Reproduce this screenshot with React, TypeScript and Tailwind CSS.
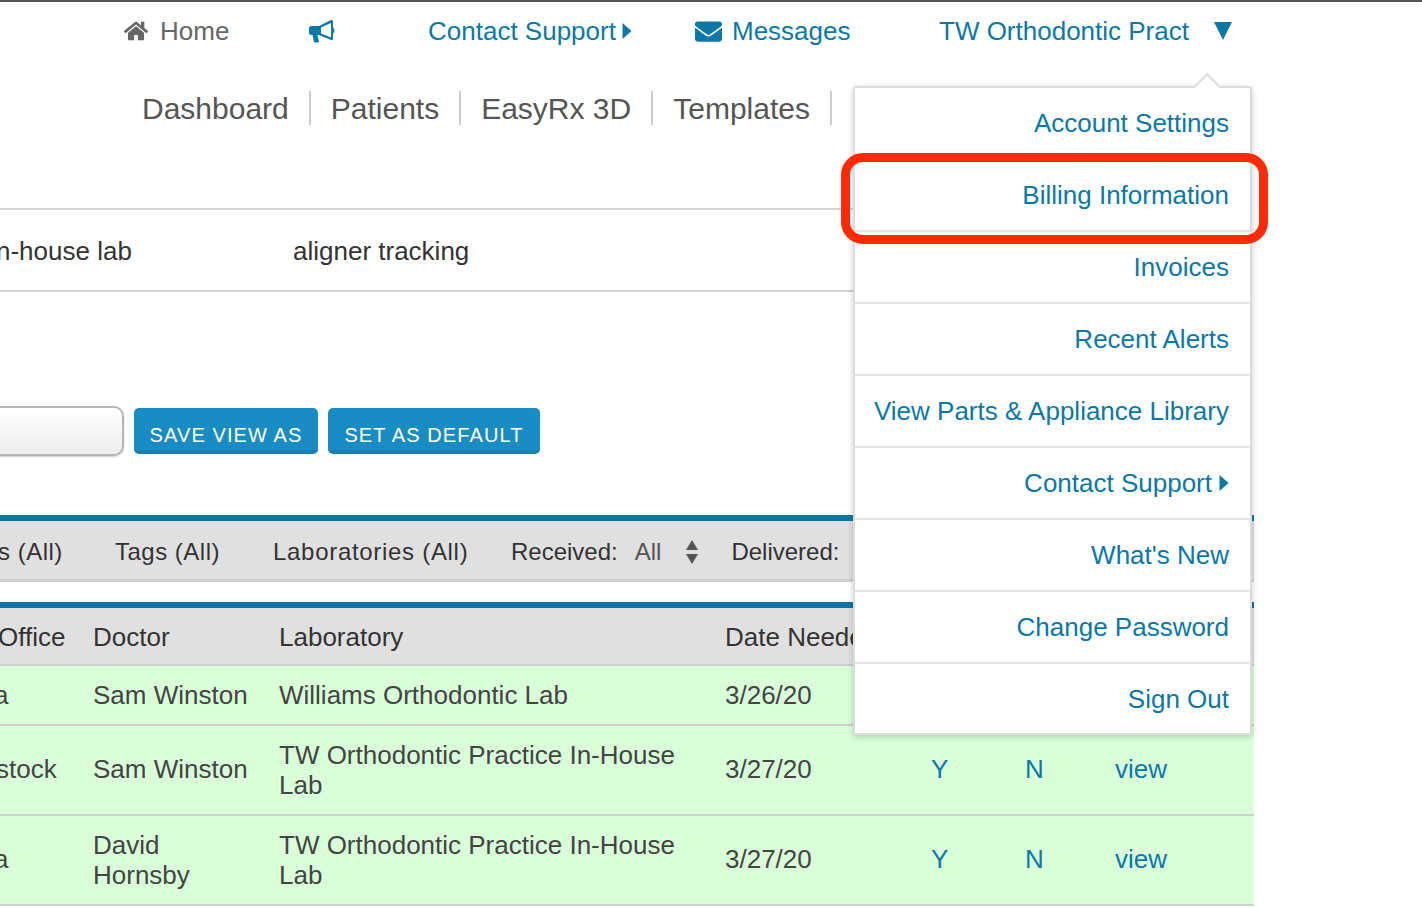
import React from 'react';
import { FaHome, FaEnvelope } from 'react-icons/fa';

const menuItems = [
  'Account Settings',
  'Billing Information',
  'Invoices',
  'Recent Alerts',
  'View Parts & Appliance Library',
  'Contact Support',
  "What's New",
  'Change Password',
  'Sign Out',
];

const rows = [
  { office: 'a', officeClass: '-ml-[6px]', doctor: 'Sam Winston', doctorClass: '', cellClass: '', lab: 'Williams Orthodontic Lab', date: '3/26/20', rowClass: 'h-[60px]' },
  { office: 'stock', officeClass: '-ml-[4px]', doctor: 'Sam Winston', doctorClass: 'mb-[2px]', cellClass: 'mb-[2px]', lab: 'TW Orthodontic Practice In-House Lab', date: '3/27/20', rowClass: 'h-[90px]' },
  { office: 'a', officeClass: '-ml-[6px]', doctor: 'David Hornsby', doctorClass: '', cellClass: 'mb-[2px]', lab: 'TW Orthodontic Practice In-House Lab', date: '3/27/20', rowClass: 'h-[90px]' },
];

const Caret: React.FC = () => (
  <svg width="10" height="18" viewBox="0 0 10 18" fill="currentColor" className="shrink-0">
    <path d="M0.5 1L9.5 9L0.5 17Z" />
  </svg>
);

const App: React.FC = () => {
  return (
    <div className="relative w-[1422px] h-[908px] overflow-hidden bg-white font-['Liberation_Sans',Arial,sans-serif] text-[26px] text-[#444]">
      {/* Top nav */}
      <div className="border-t-2 border-[#555] h-[60px] flex items-center pl-[124px] text-[#0b78a8]">
        <div className="w-[185px] flex items-center gap-[12px] text-[#666]">
          <FaHome className="text-[24px]" />
          <span>Home</span>
        </div>
        <div className="w-[119px]">
          <svg className="-ml-[1px]" width="27" height="24" viewBox="0 0 27 24" fill="currentColor">
            <path d="M1 9.5Q1 7 3.5 7H11V16H9.5L11 22.5Q11 23.5 9.5 23.5H7Q6 23.5 5.8 22.5L4.5 16H3.5Q1 16 1 13.5Z" />
            <path fillRule="evenodd" d="M11 7L23 1Q25 0.5 25 2.5V8.5Q26.5 9.5 26.5 11.5T25 14.5V19.5Q25 21.5 23 21L11 16ZM13 8.5V14.5L23 18.5V4Z" />
          </svg>
        </div>
        <div className="w-[267px] flex items-center gap-[6px]">
          <span>Contact Support</span>
          <Caret />
        </div>
        <div className="w-[244px] flex items-center gap-[10px]">
          <FaEnvelope className="text-[27px]" />
          <span>Messages</span>
        </div>
        <span>TW Orthodontic Pract</span>
        <svg className="ml-[25px]" width="18" height="18" viewBox="0 0 18 18" fill="currentColor">
          <path d="M0 0H18L9 18Z" />
        </svg>
      </div>

      {/* Main nav */}
      <div className="h-[34px] mt-[31px] flex items-center pl-[142px] text-[30px] text-[#555]">
        {['Dashboard', 'Patients', 'EasyRx 3D', 'Templates'].map((label) => (
          <div key={label} className="h-[34px] flex items-center pr-[20px] mr-[20px] border-r-2 border-[#ccc]">
            {label}
          </div>
        ))}
      </div>

      {/* Tags row */}
      <div className="mt-[83px] w-[1250px] h-[84px] pt-[2px] border-y-2 border-[#d2d2d2] flex items-center text-[26px] text-[#333]">
        <span className="w-[293px] shrink-0 -ml-[4px] mr-[4px]">n-house lab</span>
        <span>aligner tracking</span>
      </div>

      {/* View buttons */}
      <div className="mt-[114px] h-[50px] flex items-center">
        <div className="w-[124px] h-[50px] rounded-r-[10px] border-2 border-l-0 border-[#b5b5b5] bg-gradient-to-b from-white to-[#ececec] shadow-[0_1px_2px_rgba(0,0,0,0.2)]" />
        <button className="ml-[10px] w-[184px] h-[46px] pt-[12px] rounded-[5px] bg-[#1a8cc4] border-b-4 border-[#1680b5] text-white text-[20px] tracking-[1.1px]">SAVE VIEW AS</button>
        <button className="ml-[10px] w-[212px] h-[46px] pt-[12px] rounded-[5px] bg-[#1a8cc4] border-b-4 border-[#1680b5] text-white text-[20px] tracking-[1.1px]">SET AS DEFAULT</button>
      </div>

      {/* Filter bar */}
      <div className="mt-[59px] w-[1254px] h-[67px] pt-[4px] border-t-[6px] border-b-[3px] border-t-[#0b76a6] border-b-[#cfcfcf] bg-[#e0e0e0] flex items-center text-[24px] text-[#333]">
        <span className="w-[117px] shrink-0 -ml-[2px] tracking-[0.5px]">s (All)</span>
        <span className="w-[158px] shrink-0 tracking-[0.5px]">Tags (All)</span>
        <span className="w-[238px] shrink-0 tracking-[0.7px]">Laboratories (All)</span>
        <span>Received:</span>
        <span className="ml-[17px] text-[#555]">All</span>
        <svg className="ml-[24px] text-[#555]" width="14" height="26" viewBox="0 0 14 26" fill="currentColor">
          <path d="M7 1L13 11H1Z" />
          <path d="M1 15H13L7 25Z" />
        </svg>
        <span className="ml-[32px]">Delivered:</span>
      </div>

      {/* Orders table */}
      <div className="mt-[20px] w-[1254px] border-t-[6px] border-[#0b76a6]">
        <div className="h-[58px] pt-[2px] flex items-center bg-[#e0e0e0] border-b-2 border-[#cfcfcf] text-[#333]">
          <div className="w-[93px] shrink-0">
            <span className="block -ml-[2px]">Office</span>
          </div>
          <span className="w-[186px] shrink-0">Doctor</span>
          <span className="w-[446px] shrink-0">Laboratory</span>
          <span className="whitespace-nowrap">Date Needed</span>
        </div>
        {rows.map((row, i) => (
          <div key={i} className={`${row.rowClass} flex items-center bg-[#d9ffd9] border-b-2 border-[#cfcfcf] leading-[30px]`}>
            <div className={`w-[93px] shrink-0 ${row.cellClass}`}>
              <span className={`block ${row.officeClass}`}>{row.office}</span>
            </div>
            <div className={`w-[186px] shrink-0 pr-[20px] ${row.doctorClass}`}>{row.doctor}</div>
            <div className="w-[446px] shrink-0 pr-[30px]">{row.lab}</div>
            <div className={`w-[206px] shrink-0 ${row.cellClass}`}>{row.date}</div>
            <div className={`w-[94px] shrink-0 text-[#0b78a8] ${row.cellClass}`}>Y</div>
            <div className={`w-[90px] shrink-0 text-[#0b78a8] ${row.cellClass}`}>N</div>
            <div className={`text-[#0b78a8] ${row.cellClass}`}>view</div>
          </div>
        ))}
      </div>

      {/* Account dropdown */}
      <div className="absolute left-[853px] top-[86px] w-[399px] rounded-[3px] bg-white border-2 border-[#dcdcdc] shadow-[0_2px_6px_rgba(0,0,0,0.2)]">
        <div className="absolute -top-[11px] left-[342px] w-[20px] h-[20px] rotate-45 bg-white border-l-2 border-t-2 border-[#dcdcdc]" />
        {menuItems.map((item, i) => (
          <div
            key={item}
            className={`relative flex items-center justify-end gap-[7px] pr-[21px] text-[#0b78a8] ${i < menuItems.length - 1 ? 'h-[72px] border-b-2 border-[#e6e6e6]' : 'h-[69px] pt-[2px]'}`}
          >
            <span>{item}</span>
            {item === 'Contact Support' && <Caret />}
          </div>
        ))}
      </div>

      {/* Red highlight */}
      <div className="absolute left-[841px] top-[153px] w-[427px] h-[91px] rounded-[22px] border-[9px] border-[#ff2a00]" />
    </div>
  );
};

export default App;
